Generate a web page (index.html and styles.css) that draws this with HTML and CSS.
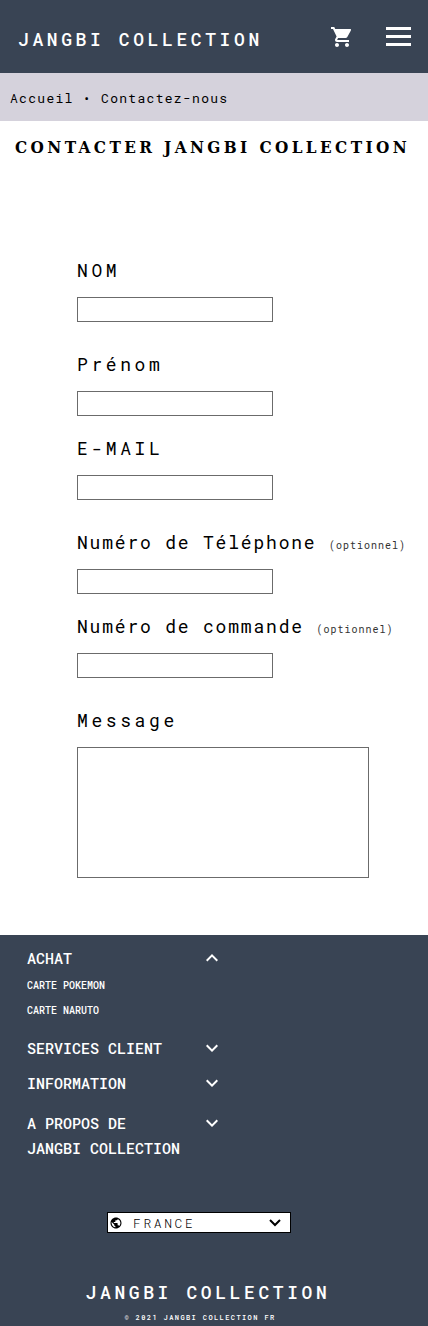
FILE: index.html
```html
<!DOCTYPE html>
<html lang="fr">
<head>
<meta charset="utf-8">
<meta name="viewport" content="width=device-width, initial-scale=1">
<title>Contacter Jangbi Collection</title>
<link rel="stylesheet" href="styles.css">
</head>
<body>
<header class="site-header">
  <a class="brand" href="#">JANGBI COLLECTION</a>
  <div class="header-actions">
    <a class="cart" href="#" aria-label="Panier">
      <svg width="24" height="24" viewBox="0 0 24 24" fill="currentColor" aria-hidden="true"><path d="M7 18c-1.100 0-1.990.900-1.990 2S5.900 22 7 22s2-.900 2-2-.900-2-2-2zM1 2v2h2l3.600 7.590-1.350 2.450c-.160.280-.250.610-.250.960 0 1.100.900 2 2 2h12v-2H7.420c-.140 0-.250-.110-.250-.250l.030-.120.900-1.630h7.450c.750 0 1.410-.410 1.750-1.030l3.580-6.490A1 1 0 0 0 20 4H5.210l-.940-2H1zm16 16c-1.100 0-1.990.900-1.990 2s.890 2 1.990 2 2-.900 2-2-.900-2-2-2z"/></svg>
    </a>
    <button class="menu" type="button" aria-label="Menu">
      <svg width="25" height="20" viewBox="0 0 25 20" fill="currentColor" aria-hidden="true"><path d="M0 0h25v3H0zM0 8h25v3H0zM0 16h25v3H0z"/></svg>
    </button>
  </div>
</header>
<nav class="breadcrumb" aria-label="Fil d'Ariane"><a href="#">Accueil</a> • <a href="#">Contactez-nous</a></nav>
<main>
  <h1 class="title">CONTACTER JANGBI COLLECTION</h1>
  <form class="contact">
    <div class="field"><label for="nom">NOM</label><input id="nom" type="text"></div>
    <div class="field spaced"><label for="prenom">Prénom</label><input id="prenom" type="text"></div>
    <div class="field"><label for="email">E-MAIL</label><input id="email" type="email"></div>
    <div class="field spaced"><label class="long" for="tel">Numéro de Téléphone <small>(optionnel)</small></label><input id="tel" type="tel"></div>
    <div class="field"><label class="long" for="commande">Numéro de commande <small>(optionnel)</small></label><input id="commande" type="text"></div>
    <div class="field spaced"><label for="message">Message</label><textarea id="message"></textarea></div>
  </form>
</main>
<footer class="site-footer">
  <div class="sections">
    <section class="section open">
      <button type="button" aria-expanded="true">ACHAT <svg class="chevron" width="24" height="24" viewBox="0 0 24 24" fill="currentColor" aria-hidden="true"><path d="M12 8l-6 6 1.410 1.410L12 10.830l4.590 4.580L18 14z"/></svg></button>
      <ul>
        <li><a href="#">CARTE POKEMON</a></li>
        <li><a href="#">CARTE NARUTO</a></li>
      </ul>
    </section>
    <section class="section"><button type="button" aria-expanded="false">SERVICES CLIENT <svg class="chevron" width="24" height="24" viewBox="0 0 24 24" fill="currentColor" aria-hidden="true"><path d="M16.590 8.590L12 13.170 7.410 8.590 6 10l6 6 6-6z"/></svg></button></section>
    <section class="section"><button type="button" aria-expanded="false">INFORMATION <svg class="chevron" width="24" height="24" viewBox="0 0 24 24" fill="currentColor" aria-hidden="true"><path d="M16.590 8.590L12 13.170 7.410 8.590 6 10l6 6 6-6z"/></svg></button></section>
    <section class="section about"><button type="button" aria-expanded="false"><span>A PROPOS DE<br>JANGBI COLLECTION</span> <svg class="chevron" width="24" height="24" viewBox="0 0 24 24" fill="currentColor" aria-hidden="true"><path d="M16.590 8.590L12 13.170 7.410 8.590 6 10l6 6 6-6z"/></svg></button></section>
  </div>
  <div class="country">
    <svg class="globe" width="12" height="12" viewBox="0 0 24 24" fill="currentColor" aria-hidden="true"><path d="M12 1C5.900 1 1 5.900 1 12s4.900 11 11 11 11-4.900 11-11S18.100 1 12 1zm-1.100 19.700c-4.300-.500-7.700-4.200-7.700-8.700 0-.700.100-1.300.200-2l5.300 5.300v1.100c0 1.200 1 2.200 2.200 2.200zm7.600-2.800c-.300-.900-1.100-1.500-2.100-1.500h-1.100v-3.300c0-.600-.500-1.100-1.100-1.100H7.600V9.800h2.200c.600 0 1.100-.500 1.100-1.100V6.500h2.200c1.200 0 2.200-1 2.200-2.200v-.500c3.200 1.300 5.500 4.500 5.500 8.200 0 2.300-.900 4.400-2.300 5.900z"/></svg>
    <select aria-label="Pays"><option>FRANCE</option></select>
    <svg class="arrow" width="14" height="10" viewBox="0 0 14 10" fill="none" stroke="currentColor" stroke-width="2" aria-hidden="true"><path d="M2 2l5 5 5-5"/></svg>
  </div>
  <a class="brand" href="#">JANGBI COLLECTION</a>
  <p class="copyright">© 2021 JANGBI COLLECTION FR</p>
</footer>
</body>
</html>
```
FILE: styles.css
```css
* { box-sizing: border-box; }

body {
  margin: 0;
  background: #fff;
  color: #000;
  font-family: "Roboto Mono", "Liberation Mono", monospace;
}

a { color: inherit; text-decoration: none; }

button {
  padding: 0;
  border: 0;
  background: none;
  color: inherit;
  font: inherit;
}

svg { display: block; flex: none; }

.site-header {
  display: flex;
  align-items: center;
  justify-content: space-between;
  padding: 23px 17px 22px 18px;
  background: #394454;
  color: #fff;
}

.brand {
  font-size: 18px;
  line-height: 24px;
  font-weight: 500;
  letter-spacing: 0.2em;
  white-space: nowrap;
}

.site-header .brand { padding-top: 4px; }

.header-actions { display: flex; align-items: center; gap: 32px; }

.breadcrumb {
  padding: 13px 10px 11px;
  background: #d5d2dc;
  font-size: 13px;
  line-height: 24px;
  letter-spacing: 0.1em;
}

.title {
  margin: 14px 0 0 15px;
  font-family: "Roboto Slab", "DejaVu Serif Condensed", "DejaVu Serif", serif;
  font-size: 17px;
  line-height: 24px;
  font-weight: 700;
  letter-spacing: 0.2em;
  white-space: nowrap;
}

.contact { padding: 99px 0 57px 77px; }

.field { display: flex; flex-direction: column; align-items: flex-start; }
.field + .field { margin-top: 20px; }
.field + .spaced { margin-top: 30px; }

.field label {
  margin-bottom: 15px;
  font-size: 18px;
  line-height: 24px;
  letter-spacing: 0.2em;
  white-space: nowrap;
}

.field .long { letter-spacing: 0.1em; }
.field small { font-size: 10px; line-height: 1; letter-spacing: 0.1em; color: #333; }

.field input, .field textarea {
  border: 1px solid #6b6b6b;
  border-radius: 0;
  background: #fff;
  font: inherit;
}

.field input { width: 196px; height: 25px; padding: 1px 4px; }
.field textarea { display: block; width: 292px; height: 131px; padding: 4px; resize: none; }

.site-footer {
  display: flex;
  flex-direction: column;
  align-items: center;
  padding-top: 11px;
  background: #394454;
  color: #fff;
}

.sections {
  display: flex;
  flex-direction: column;
  gap: 10px;
  align-self: flex-start;
  width: 197px;
  margin-left: 27px;
  font-size: 15px;
  line-height: 25px;
  font-weight: 500;
}

.section button {
  display: flex;
  align-items: flex-start;
  justify-content: space-between;
  width: 100%;
  text-align: left;
  white-space: nowrap;
}

.open { padding-bottom: 3px; }
.about { padding-top: 5px; }
.section ul { margin: 0; padding: 2px 0 0; list-style: none; font-size: 10px; }

.country {
  position: relative;
  width: 184px;
  margin: 51px 30px 47px 0;
  color: #000;
}

.country select {
  display: block;
  width: 100%;
  height: 21px;
  padding: 0 30px 0 25px;
  border: 1px solid #000;
  border-radius: 0;
  background: #fff;
  color: inherit;
  appearance: none;
  font-family: inherit;
  font-size: 13px;
  font-weight: 300;
  letter-spacing: 0.2em;
}

.globe, .arrow { position: absolute; pointer-events: none; }
.globe { top: 5px; left: 3px; }
.arrow { top: 6px; right: 9px; }

.site-footer .brand { padding-right: 12px; }

.copyright {
  margin: 7px 0 2px;
  padding-right: 28px;
  font-size: 7px;
  line-height: 13px;
  font-weight: 500;
  letter-spacing: 0.2em;
}
```
